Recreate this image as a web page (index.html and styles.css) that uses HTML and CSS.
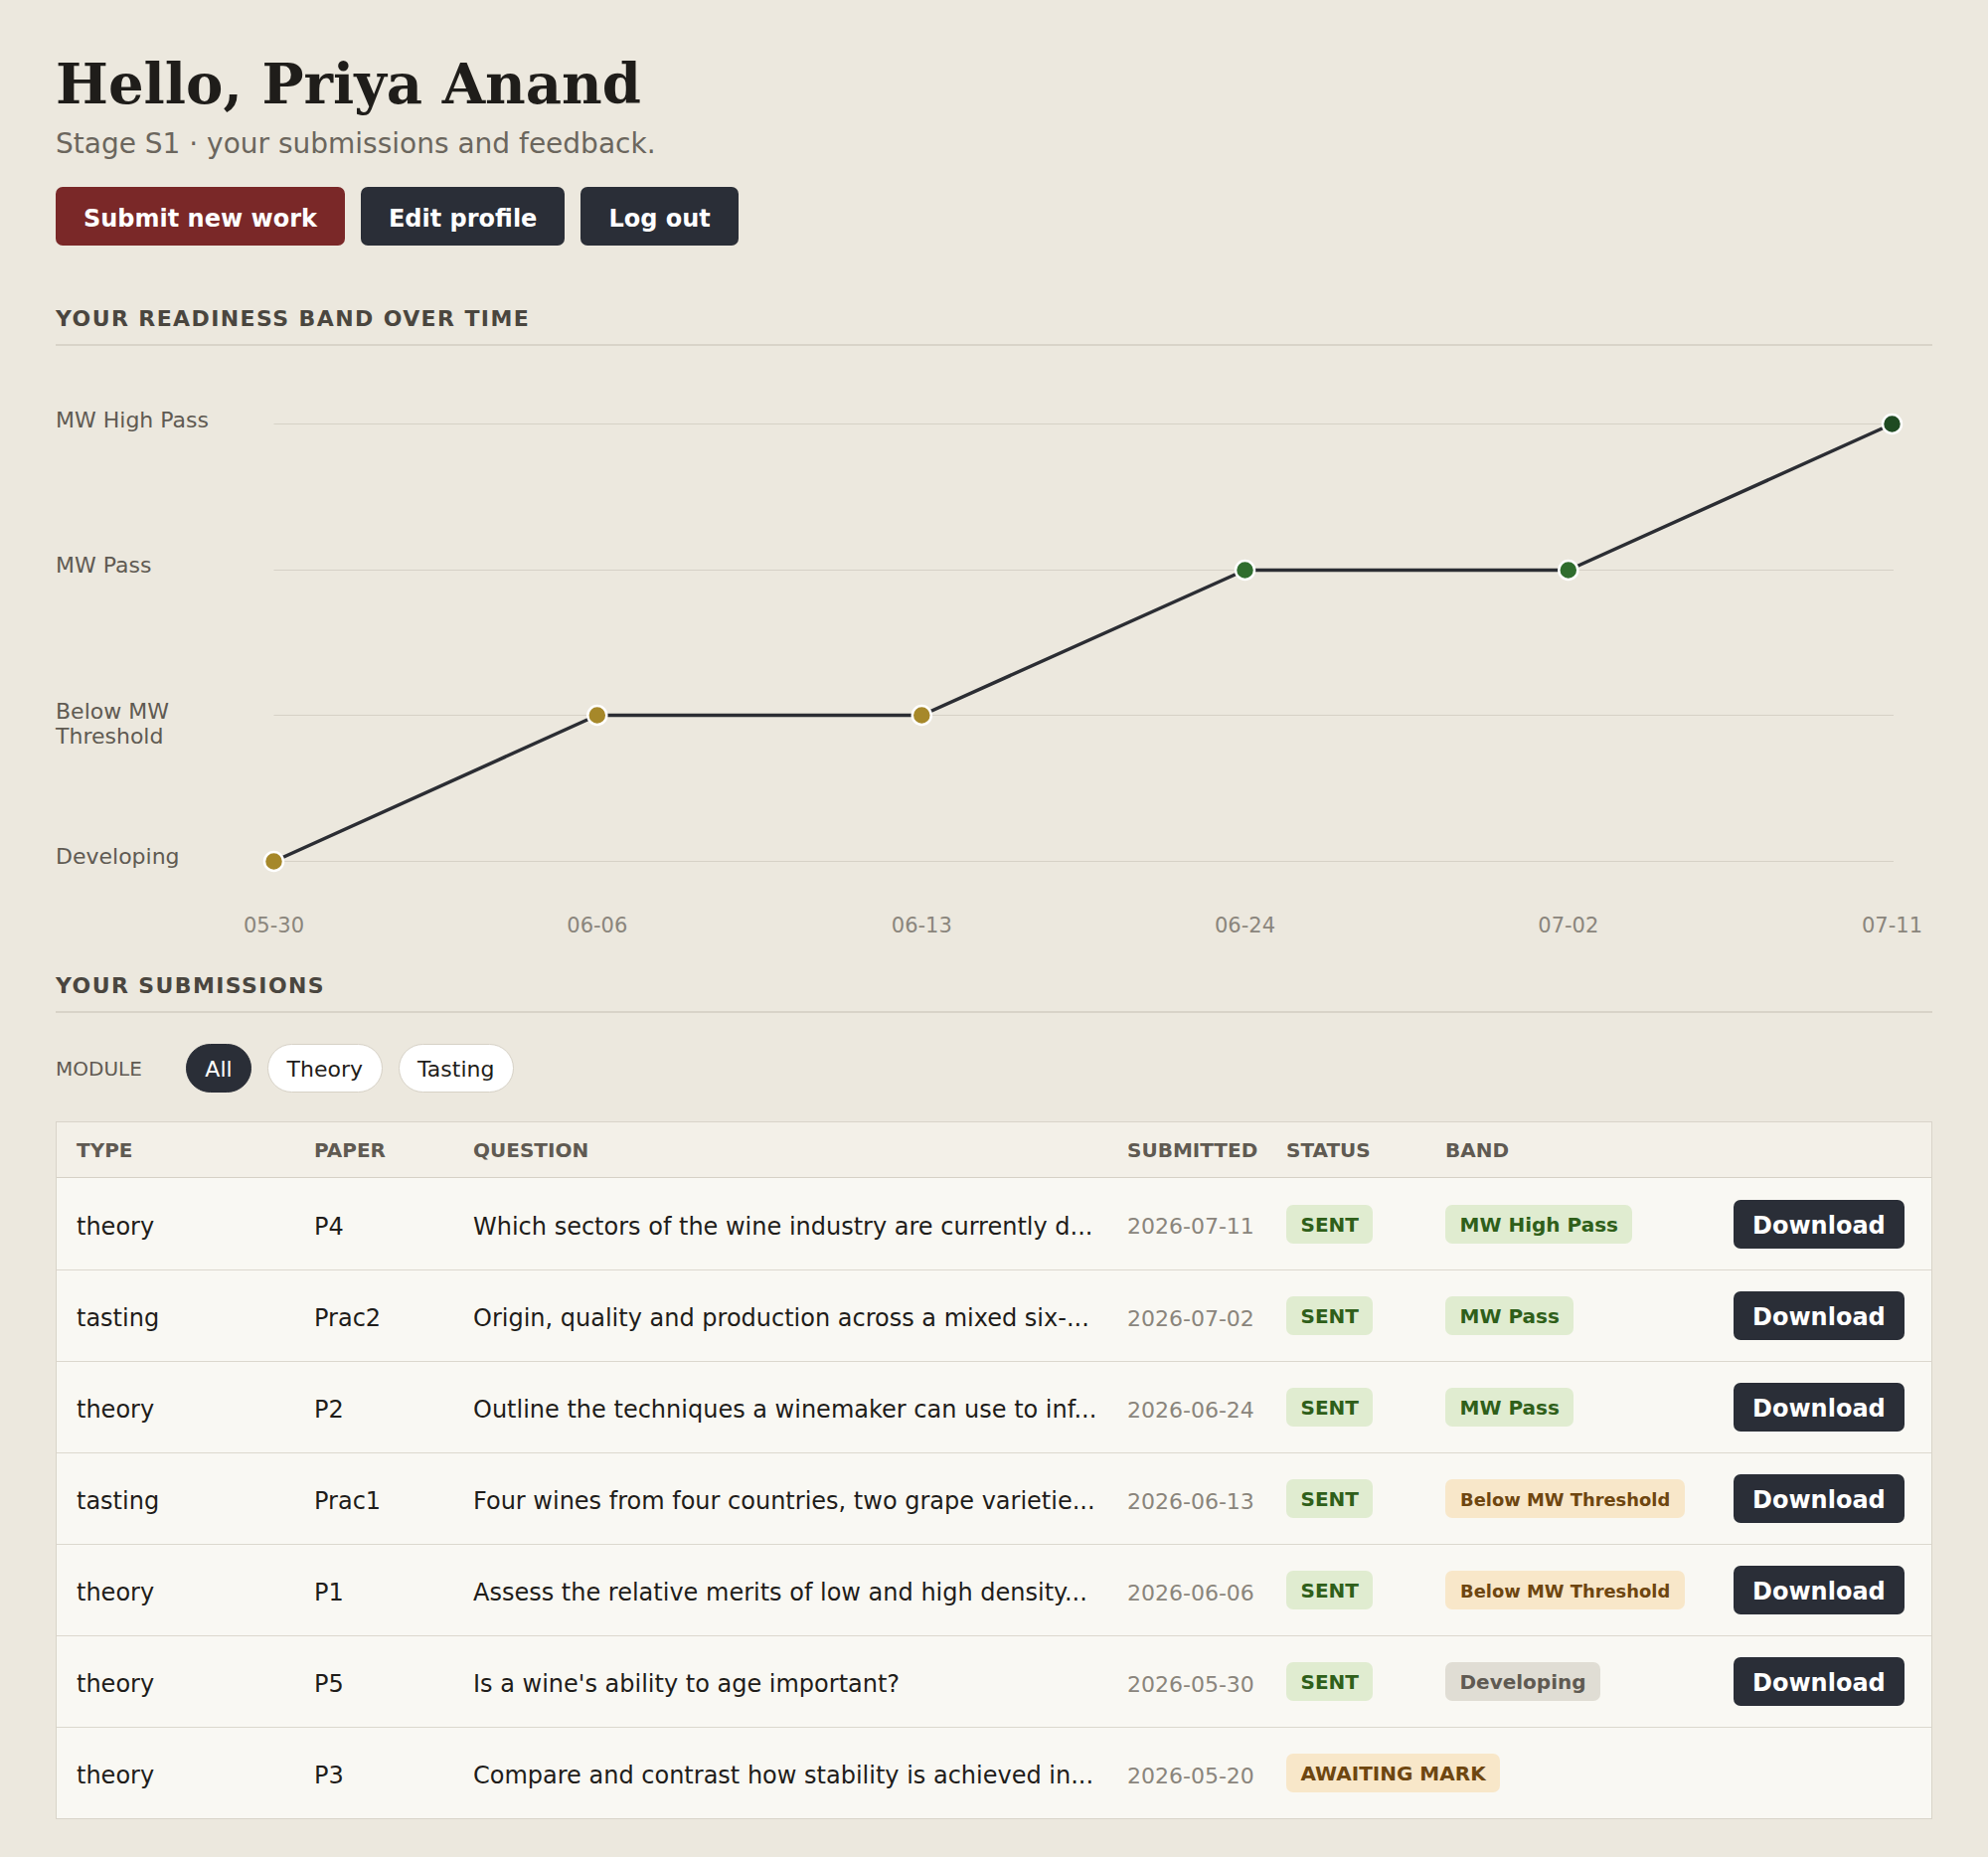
FILE: index.html
```html
<!DOCTYPE html>
<html lang="en">

<head>
    <meta charset="UTF-8">
    <meta name="viewport" content="width=device-width, initial-scale=1.0">
    <title>Priya Anand · Submissions</title>
    <link rel="stylesheet" href="styles.css">
</head>

<body>
    <div class="page">
        <header class="intro">
            <h1>Hello, Priya Anand</h1>
            <p class="lead">Stage S1 · your submissions and feedback.</p>
            <div class="actions">
                <a href="#" class="btn btn-primary">Submit new work</a>
                <a href="#" class="btn">Edit profile</a>
                <a href="#" class="btn">Log out</a>
            </div>
        </header>

        <section class="history">
            <h2 class="section-title">Your readiness band over time</h2>
            <div class="chart">
                <!-- band labels sit on the gridlines -->
                <span class="y-label" style="top: 29.5px">MW High Pass</span>
                <span class="y-label" style="top: 176px">MW Pass</span>
                <span class="y-label" style="top: 322.5px">Below MW Threshold</span>
                <span class="y-label" style="top: 469px">Developing</span>

                <svg class="plot" width="1888" height="580" viewBox="0 0 1888 580">
                    <g class="grid">
                        <line x1="219.5" x2="1849" y1="46.5" y2="46.5" />
                        <line x1="219.5" x2="1849" y1="193.5" y2="193.5" />
                        <line x1="219.5" x2="1849" y1="339.5" y2="339.5" />
                        <line x1="219.5" x2="1849" y1="486.5" y2="486.5" />
                    </g>
                    <polyline class="trend"
                        points="219.5,486.5 544.8,339.5 871.3,339.5 1196.5,193.5 1521.8,193.5 1847.5,46.5" />
                    <circle class="dot dot-dev" cx="219.5" cy="486.5" r="9.5" />
                    <circle class="dot dot-dev" cx="544.8" cy="339.5" r="9.5" />
                    <circle class="dot dot-dev" cx="871.3" cy="339.5" r="9.5" />
                    <circle class="dot dot-pass" cx="1196.5" cy="193.5" r="9.5" />
                    <circle class="dot dot-pass" cx="1521.8" cy="193.5" r="9.5" />
                    <circle class="dot dot-high" cx="1847.5" cy="46.5" r="9.5" />
                </svg>

                <span class="x-label" style="left: 219.5px">05-30</span>
                <span class="x-label" style="left: 544.8px">06-06</span>
                <span class="x-label" style="left: 871.3px">06-13</span>
                <span class="x-label" style="left: 1196.5px">06-24</span>
                <span class="x-label" style="left: 1521.8px">07-02</span>
                <span class="x-label" style="left: 1847.5px">07-11</span>
            </div>
        </section>

        <section class="submissions">
            <h2 class="section-title">Your submissions</h2>

            <div class="filters">
                <span class="filter-label">MODULE</span>
                <button class="pill active">All</button>
                <button class="pill">Theory</button>
                <button class="pill">Tasting</button>
            </div>

            <table class="subs">
                <colgroup>
                    <col class="c-type">
                    <col class="c-paper">
                    <col class="c-question">
                    <col class="c-date">
                    <col class="c-status">
                    <col class="c-band">
                    <col class="c-action">
                </colgroup>
                <thead>
                    <tr>
                        <th>Type</th>
                        <th>Paper</th>
                        <th>Question</th>
                        <th>Submitted</th>
                        <th>Status</th>
                        <th>Band</th>
                        <th></th>
                    </tr>
                </thead>
                <tbody>
                    <tr>
                        <td>theory</td>
                        <td>P4</td>
                        <td class="question">Which sectors of the wine industry are currently d...</td>
                        <td class="date">2026-07-11</td>
                        <td class="ctl"><span class="tag tag-sent">SENT</span></td>
                        <td class="ctl"><span class="tag tag-good">MW High Pass</span></td>
                        <td class="ctl"><a href="#" class="btn btn-small">Download</a></td>
                    </tr>
                    <tr>
                        <td>tasting</td>
                        <td>Prac2</td>
                        <td class="question">Origin, quality and production across a mixed six-...</td>
                        <td class="date">2026-07-02</td>
                        <td class="ctl"><span class="tag tag-sent">SENT</span></td>
                        <td class="ctl"><span class="tag tag-good">MW Pass</span></td>
                        <td class="ctl"><a href="#" class="btn btn-small">Download</a></td>
                    </tr>
                    <tr>
                        <td>theory</td>
                        <td>P2</td>
                        <td class="question">Outline the techniques a winemaker can use to inf...</td>
                        <td class="date">2026-06-24</td>
                        <td class="ctl"><span class="tag tag-sent">SENT</span></td>
                        <td class="ctl"><span class="tag tag-good">MW Pass</span></td>
                        <td class="ctl"><a href="#" class="btn btn-small">Download</a></td>
                    </tr>
                    <tr>
                        <td>tasting</td>
                        <td>Prac1</td>
                        <td class="question">Four wines from four countries, two grape varietie...</td>
                        <td class="date">2026-06-13</td>
                        <td class="ctl"><span class="tag tag-sent">SENT</span></td>
                        <td class="ctl"><span class="tag tag-warn tag-long">Below MW Threshold</span></td>
                        <td class="ctl"><a href="#" class="btn btn-small">Download</a></td>
                    </tr>
                    <tr>
                        <td>theory</td>
                        <td>P1</td>
                        <td class="question">Assess the relative merits of low and high density...</td>
                        <td class="date">2026-06-06</td>
                        <td class="ctl"><span class="tag tag-sent">SENT</span></td>
                        <td class="ctl"><span class="tag tag-warn tag-long">Below MW Threshold</span></td>
                        <td class="ctl"><a href="#" class="btn btn-small">Download</a></td>
                    </tr>
                    <tr>
                        <td>theory</td>
                        <td>P5</td>
                        <td class="question">Is a wine's ability to age important?</td>
                        <td class="date">2026-05-30</td>
                        <td class="ctl"><span class="tag tag-sent">SENT</span></td>
                        <td class="ctl"><span class="tag tag-muted">Developing</span></td>
                        <td class="ctl"><a href="#" class="btn btn-small">Download</a></td>
                    </tr>
                    <tr>
                        <td>theory</td>
                        <td>P3</td>
                        <td class="question">Compare and contrast how stability is achieved in...</td>
                        <td class="date">2026-05-20</td>
                        <td class="ctl"><span class="tag tag-warn">AWAITING MARK</span></td>
                        <td class="ctl"></td>
                        <td class="ctl"></td>
                    </tr>
                </tbody>
            </table>
        </section>
    </div>
</body>

</html>
```

FILE: styles.css
```css
* {
    margin: 0;
    padding: 0;
    box-sizing: border-box;
}

body {
    font-family: "DejaVu Sans", "Noto Sans", sans-serif;
    background-color: #ece8de;
    color: #1f1d1a;
}

.page {
    padding: 52px 56px 32px;
}

/* header */

h1 {
    font-family: "DejaVu Serif", "Liberation Serif", serif;
    font-size: 56px;
    line-height: 64px;
    font-weight: bold;
    color: #1f1d1a;
}

.lead {
    margin-top: 9px;
    font-size: 28px;
    line-height: 40px;
    color: #6b665d;
}

.actions {
    display: flex;
    gap: 16px;
    margin-top: 23px;
}

.btn {
    display: inline-block;
    padding: 17.5px 28px 12.5px;
    font-size: 24px;
    line-height: 29px;
    font-weight: bold;
    color: #fff;
    background-color: #2a2e37;
    border-radius: 7px;
    text-decoration: none;
}

.btn-primary {
    background-color: #7a2828;
}

.btn-small {
    padding: 12px 19px 8px;
}

/* section headings */

.section-title {
    margin-top: 59px;
    padding-bottom: 10px;
    font-size: 22px;
    line-height: 30px;
    letter-spacing: 1.4px;
    text-transform: uppercase;
    color: #4a463f;
    border-bottom: 2px solid #d8d3c8;
}

.submissions .section-title {
    margin-top: 17px;
}

/* band chart */

.chart {
    position: relative;
    height: 580px;
    margin-top: 32px;
}

.plot {
    display: block;
}

.grid line {
    stroke: #d6d1c6;
    stroke-width: 1;
}

.trend {
    fill: none;
    stroke: #2b2d33;
    stroke-width: 3.5;
    stroke-linejoin: round;
}

.dot {
    stroke: #fff;
    stroke-width: 2.5;
}

.dot-dev {
    fill: #a6882a;
}

.dot-pass {
    fill: #2f6d2e;
}

.dot-high {
    fill: #1f4a22;
}

.y-label {
    position: absolute;
    left: 0;
    width: 160px;
    font-size: 22px;
    line-height: 25px;
    color: #5f5a52;
}

.x-label {
    position: absolute;
    top: 539px;
    transform: translateX(-50%);
    font-size: 21px;
    line-height: 25px;
    white-space: nowrap;
    color: #8a857c;
}

/* filters */

.filters {
    display: flex;
    align-items: center;
    gap: 16px;
    margin-top: 31px;
}

.filter-label {
    margin-right: 28px;
    font-size: 20px;
    color: #5f5a52;
}

.pill {
    padding: 11px 18.5px 9px;
    font-family: inherit;
    font-size: 22px;
    line-height: 27px;
    color: #1f1d1a;
    background-color: #fff;
    border: 1px solid #d6d1c6;
    border-radius: 999px;
    cursor: pointer;
}

.pill.active {
    color: #fff;
    background-color: #2a2e37;
    border-color: #2a2e37;
}

/* submissions table */

.subs {
    width: 1888px;
    margin-top: 29px;
    table-layout: fixed;
    border-collapse: separate;
    border-spacing: 0;
    border: 1px solid #d9d4c9;
    background-color: #f9f8f3;
}

.c-type { width: 239px; }
.c-paper { width: 160px; }
.c-question { width: 658px; }
.c-date { width: 160px; }
.c-status { width: 160px; }
.c-band { width: 290px; }
.c-action { width: 219px; }

.subs th,
.subs td {
    padding: 0 16px 0 20px;
    text-align: left;
    vertical-align: middle;
    white-space: nowrap;
}

.subs th {
    height: 56px;
    font-size: 20px;
    font-weight: bold;
    text-transform: uppercase;
    color: #5f5a52;
    background-color: #f3f0e8;
    border-bottom: 1px solid #d6d1c6;
}

.subs td {
    height: 92px;
    padding-top: 5px;
    font-size: 24px;
}

.subs td.ctl {
    padding-top: 0;
}

.subs tbody tr + tr td {
    border-top: 1px solid #dcd8ce;
}

.subs .question {
    padding-right: 2px;
    overflow: hidden;
    text-overflow: ellipsis;
}

.subs .date {
    font-size: 22px;
    color: #8a857c;
}

.tag {
    display: inline-block;
    padding: 9px 14.5px 7px;
    font-size: 20px;
    line-height: 23px;
    font-weight: bold;
    border-radius: 7px;
}

.tag-sent,
.tag-good {
    color: #2f5f1a;
    background-color: #e0ecd0;
}

.tag-warn {
    color: #6e4610;
    background-color: #f8e7c9;
}

.tag-long {
    padding-left: 15px;
    padding-right: 15px;
    font-size: 17.9px;
}

.tag-muted {
    color: #5f5a52;
    background-color: #e0ddd4;
}
```
